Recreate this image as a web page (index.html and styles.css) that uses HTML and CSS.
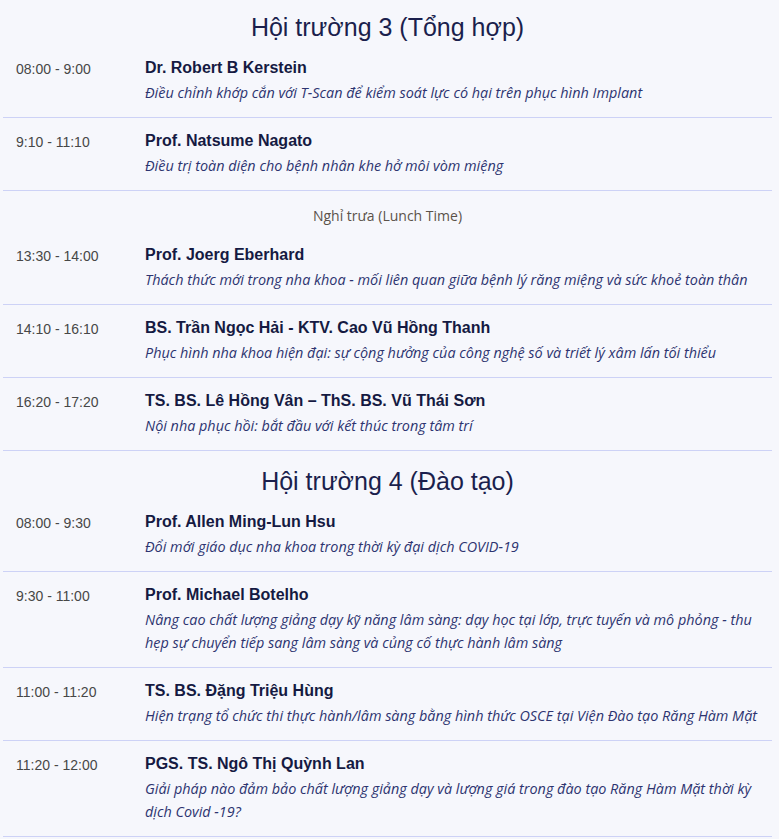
FILE: index.html
```html
<!DOCTYPE html>
<html lang="vi">
<head>
<meta charset="utf-8">
<title>Lịch trình</title>
<link rel="stylesheet" href="styles.css">
</head>
<body>
<div class="schedule">
  <section class="hall hall--first">
    <h2 class="hall-title">Hội trường 3 (Tổng hợp)</h2>
    <div class="row">
      <div class="time">08:00 - 9:00</div>
      <div class="info">
        <div class="name">Dr. Robert B Kerstein</div>
        <div class="topic">Điều chỉnh khớp cắn với T-Scan để kiểm soát lực có hại trên phục hình Implant</div>
      </div>
    </div>
    <div class="row">
      <div class="time">9:10 - 11:10</div>
      <div class="info">
        <div class="name">Prof. Natsume Nagato</div>
        <div class="topic">Điều trị toàn diện cho bệnh nhân khe hở môi vòm miệng</div>
      </div>
    </div>
    <div class="break">Nghỉ trưa (Lunch Time)</div>
    <div class="row">
      <div class="time">13:30 - 14:00</div>
      <div class="info">
        <div class="name">Prof. Joerg Eberhard</div>
        <div class="topic">Thách thức mới trong nha khoa - mối liên quan giữa bệnh lý răng miệng và sức khoẻ toàn thân</div>
      </div>
    </div>
    <div class="row">
      <div class="time">14:10 - 16:10</div>
      <div class="info">
        <div class="name">BS. Trần Ngọc Hải - KTV. Cao Vũ Hồng Thanh</div>
        <div class="topic">Phục hình nha khoa hiện đại: sự cộng hưởng của công nghệ số và triết lý xâm lấn tối thiểu</div>
      </div>
    </div>
    <div class="row">
      <div class="time">16:20 - 17:20</div>
      <div class="info">
        <div class="name">TS. BS. Lê Hồng Vân – ThS. BS. Vũ Thái Sơn</div>
        <div class="topic">Nội nha phục hồi: bắt đầu với kết thúc trong tâm trí</div>
      </div>
    </div>
  </section>
  <section class="hall">
    <h2 class="hall-title">Hội trường 4 (Đào tạo)</h2>
    <div class="row">
      <div class="time">08:00 - 9:30</div>
      <div class="info">
        <div class="name">Prof. Allen Ming-Lun Hsu</div>
        <div class="topic">Đổi mới giáo dục nha khoa trong thời kỳ đại dịch COVID-19</div>
      </div>
    </div>
    <div class="row">
      <div class="time">9:30 - 11:00</div>
      <div class="info">
        <div class="name">Prof. Michael Botelho</div>
        <div class="topic">Nâng cao chất lượng giảng dạy kỹ năng lâm sàng: dạy học tại lớp, trực tuyến và mô phỏng - thu hẹp sự chuyển tiếp sang lâm sàng và củng cố thực hành lâm sàng</div>
      </div>
    </div>
    <div class="row">
      <div class="time">11:00 - 11:20</div>
      <div class="info">
        <div class="name">TS. BS. Đặng Triệu Hùng</div>
        <div class="topic">Hiện trạng tổ chức thi thực hành/lâm sàng bằng hình thức OSCE tại Viện Đào tạo Răng Hàm Mặt</div>
      </div>
    </div>
    <div class="row">
      <div class="time">11:20 - 12:00</div>
      <div class="info">
        <div class="name">PGS. TS. Ngô Thị Quỳnh Lan</div>
        <div class="topic">Giải pháp nào đảm bảo chất lượng giảng dạy và lượng giá trong đào tạo Răng Hàm Mặt thời kỳ dịch Covid -19?</div>
      </div>
    </div>
  </section>
</div>
</body>
</html>
```

FILE: styles.css
```css
html, body {
  margin: 0;
  padding: 0;
  background: #f6f7fc;
}

.schedule {
  margin: 0 7px 0 3px;
  font-family: "Liberation Sans", Arial, sans-serif;
}

.hall--first {
  margin-top: -3px;
}

.hall-title {
  margin: 0;
  padding: 13px 0 1px;
  font-size: 25px;
  line-height: 34px;
  font-weight: 400;
  text-align: center;
  color: #1b1f4d;
}

.row {
  display: flex;
  padding: 13px 12px 13px 13px;
  border-bottom: 1px solid #cdd2f6;
}

.time {
  flex: 0 0 129px;
  font-size: 14px;
  line-height: 20px;
  padding-top: 1px;
  color: #474747;
}

.info {
  flex: 1;
  min-width: 0;
}

.name {
  font-size: 16px;
  line-height: 20px;
  font-weight: 700;
  color: #151a42;
}

.topic {
  margin-top: 3px;
  font-family: "Open Sans", sans-serif;
  font-style: italic;
  font-size: 14.4px;
  line-height: 23px;
  color: #2d3470;
}

.break {
  padding: 15px 0 6px;
  font-family: "Open Sans", sans-serif;
  font-size: 14px;
  line-height: 20px;
  text-align: center;
  color: #5b524a;
}
```
